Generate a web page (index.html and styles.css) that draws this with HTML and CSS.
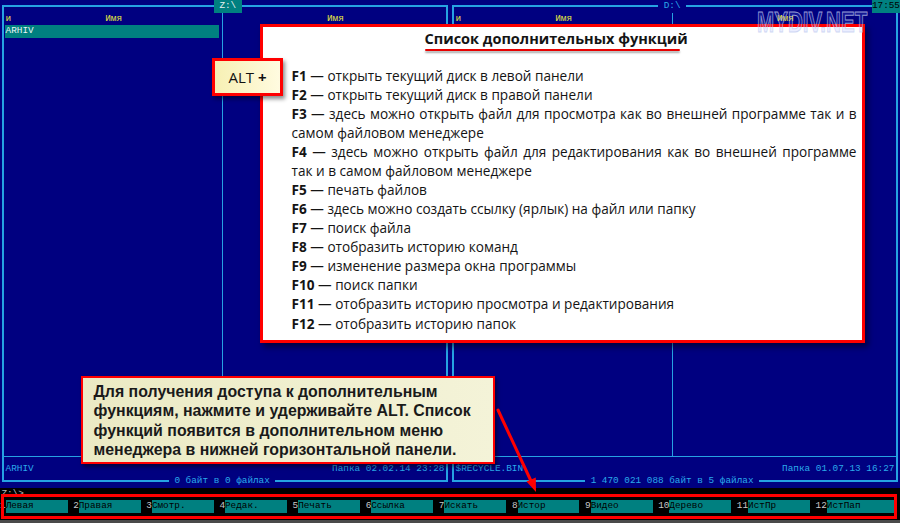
FILE: index.html
```html
<!DOCTYPE html>
<html lang="ru">
<head>
<meta charset="utf-8">
<title>FAR — дополнительные функции ALT</title>
<link rel="stylesheet" href="styles.css">
</head>
<body>
<div class="screen">
  <div class="panels">
    <section class="panel left">
      <div class="frame">
        <div class="cols">
          <div class="col">
            <div class="hdr"><span class="hl">и</span><span class="hc">Имя</span><span></span></div>
            <div class="sel">ARHIV</div>
          </div>
          <div class="vdiv"></div>
          <div class="col">
            <div class="hdr"><span></span><span class="hc">Имя</span><span></span></div>
          </div>
        </div>
        <div class="hsep"></div>
        <div class="info"><span>ARHIV</span><span>Папка 02.02.14 23:28</span></div>
      </div>
      <span class="ptitle active">Z:\</span>
      <span class="pstatus">0 байт в 0 файлах</span>
    </section>
    <section class="panel right">
      <div class="frame">
        <div class="cols">
          <div class="col">
            <div class="hdr"><span class="hl">и</span><span class="hc">Имя</span><span></span></div>
          </div>
          <div class="vdiv"></div>
          <div class="col">
            <div class="hdr"><span></span><span class="hc">Имя</span><span></span></div>
          </div>
        </div>
        <div class="hsep"></div>
        <div class="info"><span>$RECYCLE.BIN</span><span>Папка 01.07.13 16:27</span></div>
      </div>
      <span class="ptitle">D:\</span>
      <span class="pstatus">1 470 021 088 байт в 5 файлах</span>
      <span class="clock">17:55</span>
    </section>
  </div>
  <div class="cmd">Z:\&gt;_</div>
  <div class="keybar">
    <div class="key"><span class="n">1</span><span class="l">Левая</span></div>
    <div class="key"><span class="n">2</span><span class="l">Правая</span></div>
    <div class="key"><span class="n">3</span><span class="l">Смотр.</span></div>
    <div class="key"><span class="n">4</span><span class="l">Редак.</span></div>
    <div class="key"><span class="n">5</span><span class="l">Печать</span></div>
    <div class="key"><span class="n">6</span><span class="l">Ссылка</span></div>
    <div class="key"><span class="n">7</span><span class="l">Искать</span></div>
    <div class="key"><span class="n">8</span><span class="l">Истор</span></div>
    <div class="key"><span class="n">9</span><span class="l">Видео</span></div>
    <div class="key"><span class="n">10</span><span class="l">Дерево</span></div>
    <div class="key"><span class="n">11</span><span class="l">ИстПр</span></div>
    <div class="key last"><span class="n">12</span><span class="l">ИстПап</span></div>
  </div>
  <div class="bstrip"></div>

  <div class="kframe"></div>

  <div class="helpbox">
    <div class="title">Список дополнительных функций</div>
    <div class="uline"></div>
    <div class="list">
      <div><b>F1</b> — открыть текущий диск в левой панели</div>
      <div><b>F2</b> — открыть текущий диск в правой панели</div>
      <div class="jl"><b>F3</b> — здесь можно открыть файл для просмотра как во внешней программе так и в</div>
      <div>самом файловом менеджере</div>
      <div class="jl"><b>F4</b> — здесь можно открыть файл для редактирования как во внешней программе</div>
      <div>так и в самом файловом менеджере</div>
      <div><b>F5</b> — печать файлов</div>
      <div><b>F6</b> — здесь можно создать ссылку (ярлык) на файл или папку</div>
      <div><b>F7</b> — поиск файла</div>
      <div><b>F8</b> — отобразить историю команд</div>
      <div><b>F9</b> — изменение размера окна программы</div>
      <div><b>F10</b> — поиск папки</div>
      <div><b>F11</b> — отобразить историю просмотра и редактирования</div>
      <div><b>F12</b> — отобразить историю папок</div>
    </div>
  </div>

  <div class="alt">ALT <b>+</b></div>

  <div class="note">
    <div>Для получения доступа к дополнительным</div>
    <div>функциям, нажмите и удерживайте ALT. Список</div>
    <div>функций появится в дополнительном меню</div>
    <div>менеджера в нижней горизонтальной панели.</div>
  </div>

  <svg class="arrow" viewBox="0 0 900 523" width="900" height="523">
    <line x1="498" y1="410" x2="531" y2="481" stroke="#f00" stroke-width="3" stroke-linecap="round"/>
    <polygon points="536,492 526.5,481.5 535.8,477.6" fill="#f00"/>
  </svg>

  <div class="wm">MYDIV.NET</div>
</div>
</body>
</html>
```

FILE: styles.css
```css
* { box-sizing: border-box; margin: 0; padding: 0; }
html, body { width: 900px; height: 523px; overflow: hidden; background: #000; }

.screen {
  position: relative;
  width: 900px;
  height: 523px;
  overflow: hidden;
  background: #000;
  font-family: "Liberation Mono", "DejaVu Sans Mono", monospace;
  font-size: 9.375px;
  line-height: 12.5px;
  color: #2aaaea;
  white-space: nowrap;
}

/* ---------- panels ---------- */
.panels { display: flex; height: 487.5px; background: #000080; }
.panel { position: relative; width: 450px; padding: 5.25px 1.8px; }
.frame {
  height: 100%;
  border: 2px solid #26a2e2;
  display: flex;
  flex-direction: column;
}
.cols { display: grid; grid-template-columns: 217.9px 1px 1fr; height: 448.5px; }
.col { padding-top: 5.25px; }
.vdiv { background: #26a2e2; }
.hsep { height: 1px; background: #26a2e2; }
.info {
  margin-top: 5.75px;
  height: 12.5px;
  display: flex;
  justify-content: space-between;
  padding: 0 1.8px;
}
.hdr {
  display: grid;
  grid-template-columns: 1fr auto 1fr;
  height: 12.5px;
  padding-left: 1.8px;
  color: #e6e640;
}
.sel {
  height: 12.5px;
  margin: 0 2.6px 0 1.2px;
  padding-left: 0.6px;
  background: #008080;
  color: #e8f4f4;
}
.ptitle {
  position: absolute;
  top: 0;
  height: 12.5px;
  padding: 0 5.625px;
  background: #000080;
  color: #2aaaea;
}
.ptitle.active { background: #008080; color: #e4f0f0; }
.left .ptitle { left: 213.75px; }
.right .ptitle { left: 208.1px; }
.pstatus {
  position: absolute;
  top: 475px;
  height: 12.5px;
  padding: 0 5.625px;
  background: #000080;
}
.left .pstatus { left: 168.75px; }
.right .pstatus { left: 135px; }
.clock {
  position: absolute;
  top: 0;
  right: 0;
  width: 28.1px;
  height: 12.5px;
  background: #008080;
  color: #000;
}

/* ---------- command line & key bar ---------- */
.cmd { height: 12.5px; padding-left: 1.5px; color: #b8b8b8; }
.keybar { display: flex; height: 12.5px; }
.key { display: flex; margin-right: 5.625px; }
.key .n { color: #c8c8c8; }
.key .l { width: 61.875px; background: #008080; color: #000; }
.key.last { margin-right: 0; }
.key.last .l { width: 67.5px; }
.bstrip { height: 3px; margin-top: 7.5px; background: #4a4a4a; }

.kframe {
  position: absolute;
  left: 1px;
  top: 494px;
  width: 896px;
  height: 24.5px;
  border: 3px solid #f00;
}

/* ---------- help box ---------- */
.helpbox {
  position: absolute;
  left: 260px;
  top: 24px;
  width: 605px;
  height: 319px;
  padding: 2px 5.5px 0 28.5px;
  background: #fff;
  border: 3.5px solid #f00;
  box-shadow: 3px 4px 6px rgba(0, 0, 0, 0.5);
  font-family: "Open Sans", "Noto Sans", sans-serif;
  color: #141414;
  white-space: nowrap;
}
.helpbox .title {
  margin-left: 133px;
  font-weight: 700;
  font-size: 14.5px;
  line-height: 20px;
}
.uline {
  margin-left: 133px;
  margin-top: -0.5px;
  width: 255px;
  height: 2.5px;
  border-radius: 2px;
  background: #e80000;
  box-shadow: 0 2px 2px rgba(0, 0, 0, 0.35);
}
.list { margin-top: 14.9px; font-size: 13.6px; line-height: 19.05px; }
.list b { font-weight: 700; }
.list .jl { white-space: normal; text-align: justify; text-align-last: justify; }

/* ---------- callouts ---------- */
.alt {
  position: absolute;
  left: 212px;
  top: 58px;
  width: 71px;
  height: 38px;
  display: flex;
  align-items: center;
  justify-content: center;
  border: 3px solid #f00;
  background: linear-gradient(90deg, #f7f0b4, #fffbe0);
  box-shadow: 2px 3px 4px rgba(0, 0, 0, 0.45);
  font-family: "Open Sans", "Noto Sans", sans-serif;
  font-size: 15px;
  color: #111;
}
.alt b { margin-left: 4px; font-weight: 700; }

.note {
  position: absolute;
  left: 81px;
  top: 376px;
  width: 414px;
  height: 88px;
  padding: 4px 0 0 10.5px;
  border: 2.5px solid #f00;
  background: linear-gradient(90deg, #ebeac4, #f4f3d8);
  box-shadow: 2px 3px 4px rgba(0, 0, 0, 0.5);
  font-family: "Liberation Sans", Arial, sans-serif;
  font-weight: 700;
  font-size: 15.9px;
  line-height: 19.4px;
  color: #1a1a1a;
  white-space: nowrap;
}

.arrow { position: absolute; left: 0; top: 0; pointer-events: none; }

.wm {
  position: absolute;
  left: 757px;
  top: 8.3px;
  font-family: "Liberation Sans", Arial, sans-serif;
  font-weight: 700;
  font-size: 29px;
  line-height: 29px;
  color: rgba(130, 150, 255, 0.16);
  -webkit-text-stroke: 1px rgba(195, 205, 240, 0.75);
  transform: scaleX(0.71);
  transform-origin: left top;
  white-space: nowrap;
}
```
